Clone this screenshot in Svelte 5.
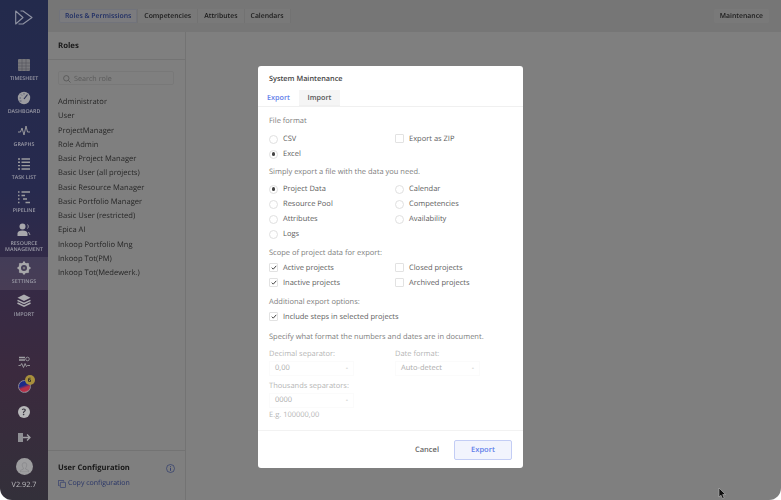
<script>
  const nav = [
    { id: 'timesheet', label: ['TIMESHEET'] },
    { id: 'dashboard', label: ['DASHBOARD'] },
    { id: 'graphs', label: ['GRAPHS'] },
    { id: 'tasks', label: ['TASK LIST'] },
    { id: 'pipeline', label: ['PIPELINE'] },
    { id: 'resource', label: ['RESOURCE', 'MANAGEMENT'] },
    { id: 'settings', label: ['SETTINGS'], active: true },
    { id: 'import', label: ['IMPORT'] }
  ];
  const tabs = ['Competencies', 'Attributes', 'Calendars'];
  const roles = [
    'Administrator', 'User', 'ProjectManager', 'Role Admin', 'Basic Project Manager',
    'Basic User (all projects)', 'Basic Resource Manager', 'Basic Portfolio Manager',
    'Basic User (restricted)', 'Epica AI', 'Inkoop Portfolio Mng', 'Inkoop Tot(PM)',
    'Inkoop Tot(Medewerk.)'
  ];
  const exportData = [
    { label: 'Project Data', on: true }, { label: 'Calendar' },
    { label: 'Resource Pool' }, { label: 'Competencies' },
    { label: 'Attributes' }, { label: 'Availability' },
    { label: 'Logs' }
  ];
  const scope = [
    { label: 'Active projects', on: true }, { label: 'Closed projects' },
    { label: 'Inactive projects', on: true }, { label: 'Archived projects' }
  ];
</script>

{#snippet radio(label, on)}
  <div class="opt">
    <span class="radio" class:on></span>
    <span>{label}</span>
  </div>
{/snippet}

{#snippet check(label, on)}
  <div class="opt">
    <span class="box">
      {#if on}
        <svg width="6" height="5" viewBox="0 0 7 6"><path d="M.8 3.2 2.6 5 6.2 1" fill="none" stroke="#444" stroke-width="1.2" /></svg>
      {/if}
    </span>
    <span>{label}</span>
  </div>
{/snippet}

{#snippet select(value)}
  <div class="select">
    <span>{value}</span>
    <span class="caret">-</span>
  </div>
{/snippet}

<div class="shell">
  <aside class="sidebar">
    <svg class="logo" width="18" height="15" viewBox="0 0 18 15">
      <path d="M.7 1v13L8 7.500zM5.500 1H8l9 6.500L8 14H3.500" fill="none" stroke="#8f93a3" stroke-width="1.100" stroke-linejoin="round" />
    </svg>
    <nav>
      {#each nav as item}
        <div class="nav-item" class:active={item.active} class:tall={item.label.length > 1}>
          <svg width="14" height="14" viewBox="0 0 14 14">
            {#if item.id === 'timesheet'}
              <rect x="1" y="1" width="12" height="12" rx="1" fill="#77777c" />
              <path d="M1 5h12M1 8h12M1 11h12M5 1v12M9 1v12" stroke="#55555c" stroke-width=".6" />
            {:else if item.id === 'dashboard'}
              <circle cx="7" cy="7" r="6.200" fill="#9c9ca0" />
              <path d="M7 8 10.500 3.500" stroke="#2a2f50" stroke-width="1.200" />
              <path d="M2.500 7H4M4 3.500l1 1M7 2v1.500M2.500 10h2" stroke="#454a66" stroke-width=".8" />
            {:else if item.id === 'graphs'}
              <path d="M1 8h2.500L5 4l2 7 2-9 1.500 6H13" fill="none" stroke="#98989c" stroke-width="1" />
            {:else if item.id === 'tasks'}
              <path d="M1 2h2M4.500 2H13M1 5.300h2M4.500 5.300H13M1 8.600h2M4.500 8.600H13M1 12h2M4.500 12H13" stroke="#9a9a9e" stroke-width="1.400" />
            {:else if item.id === 'pipeline'}
              <path d="M1 2h1.500M4.500 2H13M1 5.500h1.500M4.500 5.500H8M1 9h1.500M6 9h4M1 12.500h1.500M8.500 12.500H13" stroke="#9a9a9e" stroke-width="1.300" />
            {:else if item.id === 'resource'}
              <circle cx="5.500" cy="3.500" r="3" fill="#a8a8ac" />
              <path d="M.5 13v-2.500C.5 8.500 2.500 7.500 5.500 7.500s5 1 5 3V13z" fill="#a8a8ac" />
              <path d="M10.500 1.500c1 1 1 3 0 4M11.500 9l1.500 3" fill="none" stroke="#a8a8ac" stroke-width=".9" />
            {:else if item.id === 'settings'}
              <circle cx="7" cy="7" r="4.300" fill="none" stroke="#a8a8aa" stroke-width="2.600" />
              <path d="M7 .5v2M7 11.500v2M.5 7h2M11.500 7h2M2.400 2.400l1.400 1.400M10.200 10.200l1.400 1.400M2.400 11.600l1.400-1.400M10.200 3.800l1.400-1.400" stroke="#a8a8aa" stroke-width="2" />
              <circle cx="7" cy="7" r="1.300" fill="#7a7a7e" />
            {:else}
              <path d="M7 .5 13.500 3.700 7 6.900.5 3.700z" fill="#acacb0" />
              <path d="M.5 6.300 7 9.500l6.500-3.200M.5 9 7 12.200 13.500 9" fill="none" stroke="#acacb0" stroke-width="1.500" />
            {/if}
          </svg>
          <span class="nav-label">
            {#each item.label as line}<span>{line}</span>{/each}
          </span>
        </div>
      {/each}
    </nav>

    <div class="side-bottom">
      <svg width="13" height="13" viewBox="0 0 13 13">
        <path d="M1 1.500h6M1 4h6" stroke="#a0a0a4" stroke-width="1.300" />
        <circle cx="9.500" cy="3" r="1.800" fill="none" stroke="#a0a0a4" stroke-width=".8" />
        <path d="M.5 9.500h2l1.200-2 1.800 4 1.600-4 1.400 3 1-1h2.500" fill="none" stroke="#a0a0a4" stroke-width=".9" />
      </svg>
      <div class="org">
        <span class="org-dot"></span>
        <span class="badge">6</span>
      </div>
      <span class="help">?</span>
      <svg width="13" height="11" viewBox="0 0 13 11">
        <rect x="0" y="1" width="5" height="9" fill="#8f8f94" />
        <path d="M5 5.500h7M9 2.500l3 3-3 3" fill="none" stroke="#a0a0a4" stroke-width="1.300" />
      </svg>
      <div class="avatar">
        <svg width="9" height="10" viewBox="0 0 9 10">
          <path d="M4.500.6c1.500 0 2.300 1 2.300 2.400S6 5.500 5.600 6v1l3 1.500V10H.4V8.500L3.400 7V6C3 5.500 2.200 4.400 2.200 3S3 .6 4.500.6z" fill="none" stroke="#87878a" stroke-width=".7" />
        </svg>
      </div>
      <span class="version">V2.92.7</span>
    </div>
  </aside>

  <div class="main">
    <header class="topbar">
      <div class="tabs">
        <span class="tab current">Roles &amp; Permissions</span>
        {#each tabs as t}<span class="tab">{t}</span>{/each}
      </div>
      <span class="tab maint">Maintenance</span>
    </header>

    <div class="content">
      <section class="roles">
        <h2>Roles</h2>
        <div class="roles-body">
          <div class="search">
            <svg width="8" height="8" viewBox="0 0 8 8"><circle cx="3.300" cy="3.300" r="2.700" fill="none" stroke="#999" stroke-width=".7" /><path d="M5.300 5.300 7.500 7.500" stroke="#999" stroke-width=".7" /></svg>
            <span>Search role</span>
          </div>
          <ul>
            {#each roles as r}<li>{r}</li>{/each}
          </ul>
        </div>
        <footer class="user-config">
          <div class="uc-title">
            <strong>User Configuration</strong>
            <svg width="9" height="9" viewBox="0 0 9 9"><circle cx="4.500" cy="4.500" r="4" fill="none" stroke="#5a72d8" stroke-width=".7" /><path d="M4.500 2.200v.8M4.500 3.800v3" stroke="#5a72d8" stroke-width=".9" /></svg>
          </div>
          <div class="copy">
            <svg width="8" height="8" viewBox="0 0 8 8"><rect x="2.300" y="2.300" width="5.300" height="5.300" rx=".8" fill="none" stroke="#5a72d8" stroke-width=".7" /><path d="M1.500 5.500H.4V.4h5.100v1.100" fill="none" stroke="#5a72d8" stroke-width=".7" /></svg>
            <span>Copy configuration</span>
          </div>
        </footer>
      </section>
    </div>
  </div>

  <div class="overlay">
    <div class="modal">
      <div class="modal-title">System Maintenance</div>
      <div class="modal-tabs">
        <span class="mtab on">Export</span>
        <span class="mtab">Import</span>
      </div>

      <div class="modal-body">
        <p class="head format">File format</p>
        <div class="grid">
          {@render radio('CSV', false)}
          {@render check('Export as ZIP', false)}
          {@render radio('Excel', true)}
        </div>

        <p class="head simply">Simply export a file with the data you need.</p>
        <div class="grid">
          {#each exportData as o}
            {@render radio(o.label, o.on)}
          {/each}
        </div>

        <p class="head tight">Scope of project data for export:</p>
        <div class="grid">
          {#each scope as o}
            {@render check(o.label, o.on)}
          {/each}
        </div>

        <p class="head tight">Additional export options:</p>
        {@render check('Include steps in selected projects', true)}

        <p class="head specify">Specify what format the numbers and dates are in document.</p>
        <div class="grid">
          <div>
            <p class="flabel">Decimal separator:</p>
            {@render select('0,00')}
          </div>
          <div>
            <p class="flabel">Date format:</p>
            {@render select('Auto-detect')}
          </div>
          <div class="thousands">
            <p class="flabel">Thousands separators:</p>
            {@render select('0000')}
            <p class="flabel eg">E.g. 100000,00</p>
          </div>
        </div>
      </div>

      <div class="modal-foot">
        <span class="cancel">Cancel</span>
        <span class="export">Export</span>
      </div>
    </div>
  </div>

  <svg class="cursor" width="9" height="13" viewBox="0 0 9 13">
    <path d="M1 1v9l2-1.800 1.500 3.300 1.600-.7L4.700 7.500H7.500z" fill="#111" stroke="#bbb" stroke-width=".6" />
  </svg>
</div>

<style>
  :global(body) {
    background: #fff;
    font-family: "Open Sans", "Liberation Sans", sans-serif;
  }

  .shell {
    position: relative;
    display: flex;
    width: 781px;
    height: 500px;
    overflow: hidden;
    border-radius: 0 0 12px 12px;
    text-rendering: geometricPrecision;
  }

  .sidebar {
    width: 48px;
    flex: none;
    display: flex;
    flex-direction: column;
    align-items: center;
    filter: blur(0.4px);
    background: linear-gradient(180deg, #232a4c 0%, #272a4e 38%, #362a45 58%, #3b2a3e 75%, #33303a 100%);
  }

  .logo { margin: 10px 0 0; flex: none; }

  nav {
    margin-top: 29px;
    width: 100%;
    display: flex;
    flex-direction: column;
  }

  .nav-item {
    display: flex;
    flex-direction: column;
    align-items: center;
    height: 33px;
    padding-top: 4px;
    box-sizing: border-box;
  }

  .nav-item.tall { height: 38px; }

  .nav-item svg { flex: none; }

  .nav-item.active { background: rgba(255, 255, 255, 0.09); }

  .nav-label {
    display: flex;
    flex-direction: column;
    align-items: center;
    margin-top: 4px;
    font-size: 5.3px;
    line-height: 5.5px;
    font-weight: 600;
    color: #9a9aa6;
  }

  .side-bottom {
    margin-top: 33px;
    display: flex;
    flex-direction: column;
    align-items: center;
  }

  .side-bottom > svg:first-child { margin-bottom: 11px; }

  .org {
    position: relative;
    width: 13px;
    height: 13px;
    margin-bottom: 13px;
  }

  .org-dot {
    display: block;
    width: 13px;
    height: 13px;
    box-sizing: border-box;
    border: 1px solid #8d8794;
    border-radius: 50%;
    background: linear-gradient(160deg, #1c2a88 0 40%, #b52f48 60% 80%, #c98a98 100%);
  }

  .badge {
    position: absolute;
    top: -5px;
    right: -4px;
    width: 10px;
    height: 10px;
    border-radius: 50%;
    background: #a88f3c;
    color: #2c2a28;
    font-size: 6px;
    font-weight: 700;
    line-height: 10px;
    text-align: center;
  }

  .help {
    width: 12px;
    height: 12px;
    border-radius: 50%;
    background: #b8b8ba;
    color: #3e3a44;
    font-size: 9px;
    font-weight: 700;
    line-height: 12px;
    text-align: center;
    margin-bottom: 14px;
  }

  .avatar {
    width: 17px;
    height: 17px;
    margin-top: 15px;
    border-radius: 50%;
    background: #9d9d9f;
    display: flex;
    align-items: center;
    justify-content: center;
  }

  .version {
    margin-top: 5px;
    font-size: 7.3px;
    color: #bdbdc0;
  }

  .main {
    position: relative;
    flex: 1;
    min-width: 0;
    display: flex;
    flex-direction: column;
    background: #fff;
    filter: blur(0.4px);
  }

  .main::after {
    content: '';
    position: absolute;
    inset: 0;
    background: rgba(0, 0, 0, 0.5);
  }

  .topbar {
    height: 32px;
    flex: none;
    background: #ededed;
    display: flex;
    align-items: center;
    justify-content: space-between;
    padding: 0 12px 0 11px;
  }

  .tabs { display: flex; }

  .tab {
    height: 14px;
    padding: 0 6px;
    font-size: 6.85px;
    font-weight: 600;
    line-height: 15px;
    color: #3a3a3a;
    background: #f2f2f2;
    border-right: 1px solid #e4e4e4;
  }

  .tab.current {
    color: #3f5bc8;
    background: #f6f7fd;
    border-radius: 2px 0 0 2px;
    box-shadow: inset 0 0 0 1px #e2e6f6;
  }

  .tab.maint {
    border: 0;
    border-radius: 2px;
  }

  .content {
    flex: 1;
    min-height: 0;
    display: flex;
  }

  .roles {
    width: 138px;
    box-sizing: border-box;
    border-right: 1px solid #e6e6e6;
    display: flex;
    flex-direction: column;
  }

  h2 {
    margin: 0;
    height: 28px;
    flex: none;
    box-sizing: border-box;
    border-bottom: 1px solid #e6e6e6;
    padding: 1px 0 0 10px;
    font-size: 7.8px;
    font-weight: 700;
    line-height: 27px;
    color: #333;
  }

  .roles-body {
    flex: 1;
    padding: 11px 11px 0 10px;
  }

  .search {
    height: 14px;
    display: flex;
    align-items: center;
    gap: 3px;
    padding: 1px 0 0 4px;
    box-sizing: border-box;
    border: 1px solid #f1f1f1;
    border-radius: 2px;
    font-size: 7.2px;
    color: #b3b3b3;
  }

  ul {
    list-style: none;
    margin: 10px 0 0;
    padding: 0;
    font-size: 7.6px;
    line-height: 14.27px;
    color: #4d4d4d;
  }

  .user-config {
    flex: none;
    height: 50px;
    box-sizing: border-box;
    border-top: 1px solid #e6e6e6;
    padding: 12px 10px 0 10px;
  }

  .uc-title {
    display: flex;
    align-items: center;
    justify-content: space-between;
    font-size: 7.6px;
    color: #333;
  }

  .copy {
    display: flex;
    align-items: center;
    gap: 2px;
    margin-top: 6px;
    font-size: 7px;
    color: #4f68cc;
  }

  .overlay {
    position: absolute;
    inset: 0;
    display: flex;
    justify-content: center;
    align-items: flex-start;
    padding-top: 66px;
    box-sizing: border-box;
  }

  .modal {
    width: 265px;
    height: 402px;
    background: #fff;
    border-radius: 3px;
    display: flex;
    flex-direction: column;
    font-size: 7.5px;
    color: #5c5c5c;
  }

  .modal-title {
    padding: 7px 11px 0;
    height: 24px;
    box-sizing: border-box;
    font-size: 7.3px;
    font-weight: 600;
    line-height: 12px;
    color: #444;
  }

  .modal-tabs {
    display: flex;
    height: 17px;
    flex: none;
    box-sizing: border-box;
    border-bottom: 1px solid #f0f0f0;
  }

  .mtab {
    width: 41px;
    line-height: 17px;
    text-align: center;
    font-size: 7.2px;
    font-weight: 600;
    background: #f5f5f5;
    color: #555;
    border-bottom: 1px solid #f0f0f0;
  }

  .mtab.on {
    background: #fff;
    color: #5f7eea;
    border-bottom-color: #fff;
  }

  .modal-body {
    flex: 1;
    padding: 0 11px;
  }

  .head {
    margin: 5.5px 0 1.5px;
    line-height: 12px;
    color: #7d7d7d;
  }

  .head.format { margin: 8px 0 4.5px; }
  .head.simply { margin: 4.5px 0 3.5px; }
  .head.specify { margin: 6.5px 0 5px; }

  .grid {
    display: grid;
    grid-template-columns: 126px 1fr;
  }

  .opt {
    display: flex;
    align-items: center;
    gap: 5px;
    height: 15px;
  }

  .radio {
    width: 9px;
    height: 9px;
    box-sizing: border-box;
    border: 1px solid #e0e0e0;
    border-radius: 50%;
    position: relative;
    flex: none;
  }

  .radio.on::after {
    content: '';
    position: absolute;
    inset: 1.8px;
    border-radius: 50%;
    background: #444;
  }

  .box {
    width: 9px;
    height: 9px;
    box-sizing: border-box;
    margin-top: -1px;
    border: 1px solid #e2e2e2;
    border-radius: 1px;
    display: flex;
    align-items: center;
    justify-content: center;
    flex: none;
  }

  .thousands { grid-column: 1; margin-top: 4.5px; }

  .flabel {
    margin: 0;
    line-height: 12px;
    color: #b5b5b5;
  }

  .flabel.eg { margin-top: 0.5px; line-height: 14px; }

  .select {
    width: 85px;
    height: 15px;
    box-sizing: border-box;
    margin-top: 0.5px;
    padding: 0 5px;
    display: flex;
    justify-content: space-between;
    align-items: center;
    border: 1px solid #fbfbfb;
    color: #ababab;
  }

  .caret { font-size: 7px; }

  .modal-foot {
    flex: none;
    height: 38px;
    box-sizing: border-box;
    border-top: 1px solid #f2f2f2;
    display: flex;
    align-items: center;
    justify-content: flex-end;
    gap: 15px;
    padding: 0 11px 0 0;
    font-weight: 600;
  }

  .cancel { color: #666; }

  .export {
    width: 58px;
    height: 20px;
    box-sizing: border-box;
    border: 1px solid #c3cdf5;
    border-radius: 2px;
    background: #f2f4fd;
    color: #5f7eea;
    text-align: center;
    line-height: 18px;
  }

  .cursor {
    position: absolute;
    left: 718px;
    top: 487px;
  }
</style>
